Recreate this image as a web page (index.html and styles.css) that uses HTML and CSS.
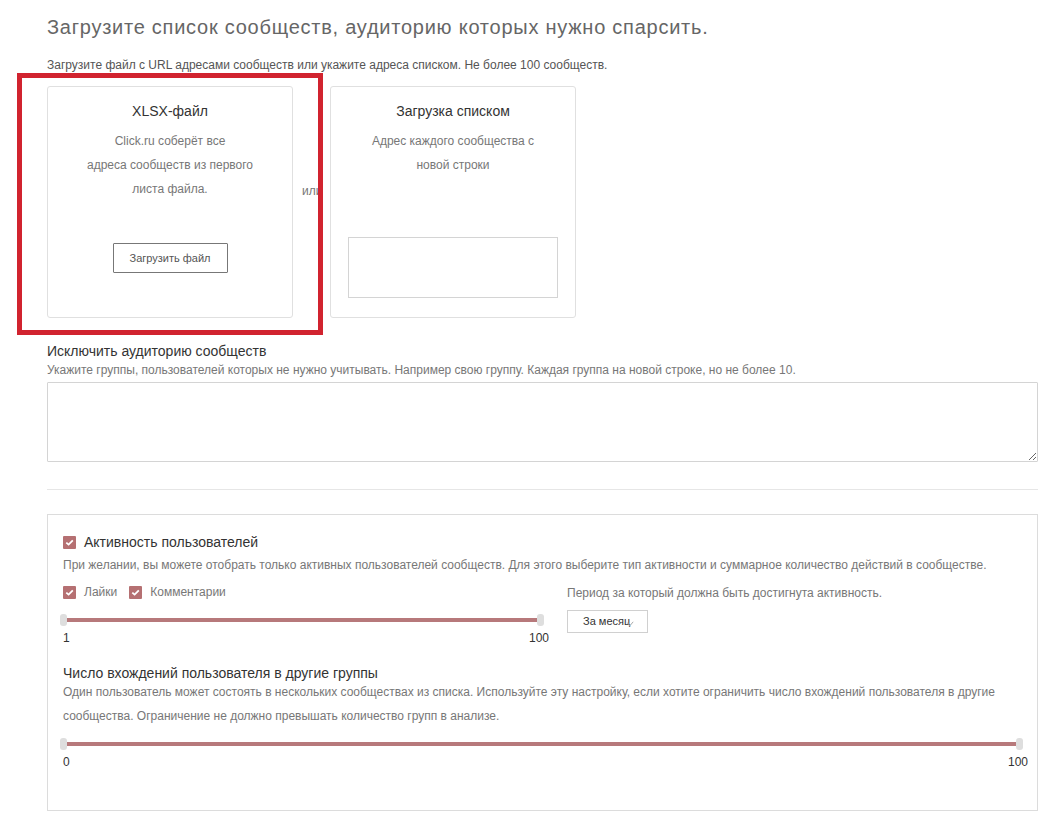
FILE: index.html
```html
<!DOCTYPE html>
<html lang="ru">
<head>
<meta charset="utf-8">
<title>Парсер аудитории</title>
<link rel="stylesheet" href="styles.css">
</head>
<body>
<div class="page">
  <h1 class="title">Загрузите список сообществ, аудиторию которых нужно спарсить.</h1>
  <p class="lead">Загрузите файл с URL адресами сообществ или укажите адреса списком. Не более 100 сообществ.</p>

  <div class="cards">
    <div class="card">
      <div class="card-title">XLSX-файл</div>
      <div class="card-text">Click.ru соберёт все<br>адреса сообществ из первого<br>листа файла.</div>
      <button class="upload">Загрузить файл</button>
    </div>
    <div class="or">или</div>
    <div class="card">
      <div class="card-title">Загрузка списком</div>
      <div class="card-text">Адрес каждого сообщества с<br>новой строки</div>
      <textarea class="list-input"></textarea>
    </div>
    <div class="highlight"></div>
  </div>

  <div class="exclude">
    <div class="section-title">Исключить аудиторию сообществ</div>
    <div class="hint">Укажите группы, пользователей которых не нужно учитывать. Например свою группу. Каждая группа на новой строке, но не более 10.</div>
    <textarea class="exclude-input"></textarea>
  </div>

  <hr class="sep">

  <div class="box">
    <label class="check-row main">
      <span class="cb"><svg viewBox="0 0 13 13" width="13" height="13"><path d="M3.3 6.6 L5.6 8.6 L9.8 4.4" fill="none" stroke="#fff" stroke-width="1.8"/></svg></span>
      <span>Активность пользователей</span>
    </label>
    <div class="desc">При желании, вы можете отобрать только активных пользователей сообществ. Для этого выберите тип активности и суммарное количество действий в сообществе.</div>

    <div class="activity">
      <div class="act-left">
        <div class="checks">
          <label class="check-row small">
            <span class="cb"><svg viewBox="0 0 13 13" width="13" height="13"><path d="M3.3 6.6 L5.6 8.6 L9.8 4.4" fill="none" stroke="#fff" stroke-width="1.8"/></svg></span>
            <span>Лайки</span>
          </label>
          <label class="check-row small">
            <span class="cb"><svg viewBox="0 0 13 13" width="13" height="13"><path d="M3.3 6.6 L5.6 8.6 L9.8 4.4" fill="none" stroke="#fff" stroke-width="1.8"/></svg></span>
            <span>Комментарии</span>
          </label>
        </div>
        <div class="slider s1">
          <div class="track"></div>
          <span class="thumb left"></span>
          <span class="thumb right"></span>
        </div>
        <div class="scale"><span>1</span><span>100</span></div>
      </div>
      <div class="act-right">
        <div class="period">Период за который должна быть достигнута активность.</div>
        <div class="select">За месяц<svg class="chev" viewBox="0 0 8 6" width="8" height="6"><path d="M0.8 1.5 L4 4.6 L7.2 0.8" fill="none" stroke="#aaa" stroke-width="1"/></svg></div>
      </div>
    </div>

    <div class="section-title groups-title">Число вхождений пользователя в другие группы</div>
    <div class="desc tall">Один пользователь может состоять в нескольких сообществах из списка. Используйте эту настройку, если хотите ограничить число вхождений пользователя в другие сообщества. Ограничение не должно превышать количество групп в анализе.</div>
    <div class="wide">
      <div class="slider s2">
        <div class="track"></div>
        <span class="thumb left"></span>
        <span class="thumb right"></span>
      </div>
      <div class="scale"><span>0</span><span>100</span></div>
    </div>
  </div>
</div>
</body>
</html>
```

FILE: styles.css
```css
* { box-sizing: border-box; }
html, body { margin: 0; padding: 0; background: #fff; }
body {
  font-family: "Liberation Sans", Arial, sans-serif;
  color: #333;
}
.page {
  padding: 14px 19px 0 47px;
  position: relative;
}
.title {
  margin: 0;
  font-size: 20px;
  line-height: 26px;
  font-weight: normal;
  color: #666;
  letter-spacing: 0.75px;
}
.lead {
  margin: 17px 0 0;
  font-size: 12px;
  line-height: 16px;
  color: #555;
}
.cards {
  display: flex;
  margin-top: 13px;
  position: relative;
}
.card {
  width: 246px;
  height: 232px;
  border: 1px solid #e0e0e0;
  border-radius: 3px;
  padding: 15px 18px 19px;
  display: flex;
  flex-direction: column;
  align-items: center;
  text-align: center;
}
.card-title {
  font-size: 14px;
  line-height: 18px;
  color: #333;
}
.card-text {
  margin-top: 9px;
  font-size: 12px;
  line-height: 24px;
  color: #777;
}
.upload {
  margin-top: 42px;
  width: 115px;
  height: 30px;
  background: #fff;
  border: 1px solid #777;
  border-radius: 1px;
  font-family: "Liberation Sans", Arial, sans-serif;
  font-size: 11px;
  color: #555;
  padding: 0;
}
.or {
  margin: 97px 10px 0 9px;
  font-size: 12px;
  line-height: 16px;
  color: #777;
  width: 18px;
  white-space: nowrap;
}
.list-input {
  margin-top: auto;
  width: 210px;
  height: 61px;
  border: 1px solid #d4d4d4;
  resize: none;
  display: block;
}
.highlight {
  position: absolute;
  left: -30px;
  top: -13px;
  width: 306px;
  height: 262px;
  border: 5px solid #d1232f;
  pointer-events: none;
}
.exclude { margin-top: 24px; }
.section-title {
  font-size: 14px;
  line-height: 18px;
  color: #333;
}
.hint {
  margin-top: 2px;
  font-size: 12px;
  line-height: 16px;
  color: #777;
}
.exclude-input {
  display: block;
  margin-top: 4px;
  width: 991px;
  height: 80px;
  border: 1px solid #d4d4d4;
  border-radius: 1px;
}
.sep {
  margin: 27px 0 0;
  border: 0;
  border-top: 1px solid #e6e6e6;
  width: 991px;
}
.box {
  margin-top: 24px;
  width: 991px;
  height: 297px;
  border: 1px solid #dcdcdc;
  padding: 18px 9px 0 15px;
}
.check-row {
  display: flex;
  align-items: center;
  height: 18px;
}
.check-row.main { font-size: 14px; color: #333; }
.check-row.main .cb { margin-right: 8px; }
.check-row.small { font-size: 12px; color: #777; }
.check-row.small .cb { margin-right: 8px; }
.cb {
  width: 13px;
  height: 13px;
  background: #b57072;
  border-radius: 1px;
  display: inline-flex;
}
.cb svg { display: block; }
.desc {
  margin-top: 6px;
  font-size: 12px;
  line-height: 16px;
  color: #777;
}
.activity {
  display: flex;
  margin-top: 10px;
  gap: 18px;
}
.act-left { width: 486px; }
.checks { display: flex; gap: 12px; }
.slider {
  position: relative;
  height: 12px;
  margin-top: 13px;
}
.slider .track {
  position: absolute;
  left: 0;
  right: 8px;
  top: 4px;
  height: 4px;
  background: #b7797b;
}
.thumb {
  position: absolute;
  top: 0;
  width: 7px;
  height: 12px;
  background: #dedede;
  border-radius: 3px;
}
.thumb.left { left: -3px; }
.thumb.right { right: 5px; }
.scale {
  display: flex;
  justify-content: space-between;
  font-size: 12px;
  line-height: 16px;
  color: #333;
  margin-top: 4px;
}
.act-right { padding-top: 2px; }
.period {
  font-size: 12px;
  line-height: 16px;
  color: #777;
}
.select {
  position: relative;
  margin-top: 9px;
  width: 81px;
  height: 23px;
  border: 1px solid #d0d0d0;
  font-size: 11px;
  line-height: 21px;
  color: #333;
  padding-left: 15px;
}
.chev {
  position: absolute;
  left: 58px;
  top: 10px;
}
.groups-title { margin-top: 18px; }
.desc.tall {
  margin-top: -2px;
  line-height: 24px;
}
.wide { width: 965px; }
.s2 { margin-top: 10px; }
```
